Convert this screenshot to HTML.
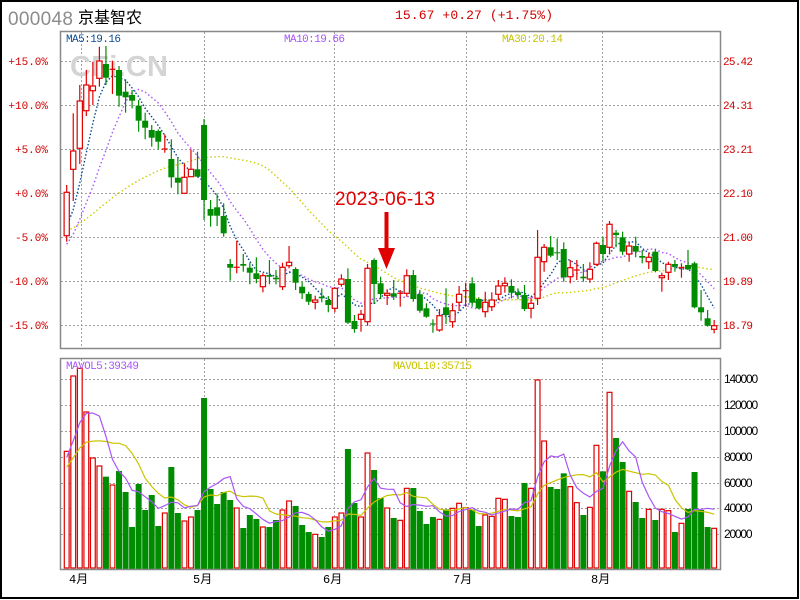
<!DOCTYPE html>
<html><head><meta charset="utf-8"><style>
html,body{margin:0;padding:0;background:#fff;}
#wrap{width:800px;height:600px;position:relative;overflow:hidden;}
svg text{font-family:"Liberation Mono",monospace;}
</style></head><body><div id="wrap">
<svg id="s" width="800" height="600" xmlns="http://www.w3.org/2000/svg">
<rect x="1" y="1" width="797" height="597" fill="#fff" stroke="#000" stroke-width="2"/>
<text x="8" y="25" font-size="19" fill="#8c8c8c" style="font-family:'Liberation Sans',sans-serif" textLength="65">000048</text>
<text x="78" y="23" font-size="16" fill="#000" style="font-family:'Liberation Sans','Noto Sans CJK SC',sans-serif">京基智农</text>
<text x="395" y="19" font-size="13" fill="#d00000" textLength="158">15.67 +0.27 (+1.75%)</text>
<g id="grid" stroke="#a0a0a0" stroke-width="1" stroke-dasharray="2 2"></g>
<text x="70" y="76" font-size="29" font-weight="bold" fill="#d4d4d4" style="font-family:'Liberation Sans',sans-serif" textLength="98">CFi.CN</text>
<g id="ma"></g>
<g id="cd"></g>
<g id="vol"></g>
<rect x="60.5" y="31.5" width="660" height="317" fill="none" stroke="#888" stroke-width="1.5"/>
<rect x="60.5" y="358.5" width="660" height="211" fill="none" stroke="#888" stroke-width="1.5"/>
<text x="66" y="42" font-size="11" fill="#0a4a96" textLength="55">MA5:19.16</text>
<text x="284" y="42" font-size="11" fill="#a855f7" textLength="61">MA10:19.66</text>
<text x="502" y="42" font-size="11" fill="#c8c400" textLength="61">MA30:20.14</text>
<text x="66" y="369" font-size="11" fill="#a855f7" textLength="73">MAVOL5:39349</text>
<text x="393" y="369" font-size="11" fill="#c8c400" textLength="79">MAVOL10:35715</text>
<g id="lab" font-size="11" fill="#d00000"></g>
<g id="vlab" font-size="12" fill="#000"></g>
<g font-size="12" fill="#000" style="font-family:'Liberation Sans','Noto Sans CJK SC',sans-serif">
<text x="69" y="583">4月</text><text x="193" y="583">5月</text><text x="323" y="583">6月</text><text x="453" y="583">7月</text><text x="591" y="583">8月</text>
</g>
<text x="335" y="205" font-size="19" fill="#e00000" style="font-family:'Liberation Sans',sans-serif" textLength="100">2023-06-13</text>
<rect x="384.5" y="212" width="4" height="40" fill="#e00000"/>
<polygon points="378,248 395,248 386.5,269" fill="#e00000"/>
</svg>
<script>
var NS="http://www.w3.org/2000/svg";
function el(p,t,a){var e=document.createElementNS(NS,t);for(var k in a)e.setAttribute(k,a[k]);p.appendChild(e);return e;}
var g=document.getElementById('grid');
[81,204,334,466,602].forEach(function(x){el(g,'line',{x1:x+.5,y1:32,x2:x+.5,y2:348});el(g,'line',{x1:x+.5,y1:359,x2:x+.5,y2:569});});
[61,105,149,193,237,281,325].forEach(function(y){el(g,'line',{x1:61,y1:y+.5,x2:720,y2:y+.5});});
[379,405,431,457,483,508,534].forEach(function(y){el(g,'line',{x1:61,y1:y+.5,x2:720,y2:y+.5});});
var lab=document.getElementById('lab');
var L=["+15.0%","+10.0%","+5.0%","+0.0%","-5.0%","-10.0%","-15.0%"],R=["25.42","24.31","23.21","22.10","21.00","19.89","18.79"];
[61,105,149,193,237,281,325].forEach(function(y,i){var t=el(lab,'text',{x:48,y:y+4,'text-anchor':'end'});t.textContent=L[i];var r=el(lab,'text',{x:723,y:y+4,textLength:30});r.textContent=R[i];});
var vl=document.getElementById('vlab');
["140000","120000","100000","80000","60000","40000","20000"].forEach(function(s,i){var y=[379,405,431,457,483,508,534][i];var t=el(vl,'text',{x:724,y:y+4,textLength:s.length*5.7,style:"font-family:'Liberation Sans',sans-serif"});t.textContent=s;});
var D=[[235.7,192.3,185,241.7],[169.3,151,113.3,201],[148.3,101,85,164],[110.7,85,70,116],[90.7,86,61.7,105],[78.3,61,46.7,86.7],[64,77.7,46,85],[69.3,69.3,60.7,94,1],[70,95.7,66,106.7],[91.7,97.3,79.3,112.7],
[95,100.7,90,108.3],[105.7,120.7,100,131.7],[120.7,127.7,112.7,139.3],[130,137.7,125,146.7],[131,141.7,129.3,149.3],[149,149,134.3,152.7,1],[159,177.3,139.3,187.7],[177.7,182.7,158.3,194.3],[193.3,177.3,163.3,193.3],[176.7,169.3,149.3,176.7],
[169.3,176.7,151.7,176.7],[125,200,119,220],[209,215.7,200,226.7],[207.3,215.7,194.3,226],[216,233.3,203.3,236.7],[264,267.7,259,280.7],[267.3,267.3,240.7,273.3,1],[264,265.7,254,271.7],[267.7,272.7,262.7,284.3],[273.3,279,257.3,283.3],
[286.7,275.7,273.3,292.3],[275,276.7,260,284.3],[277.7,279.3,270,284.3],[286.7,267.3,262.7,290],[265.7,262.3,246,268.3],[269,282.7,267.3,290],[286.7,293.3,281.7,299],[294,301.7,291.7,305],[302.3,300,295.7,309.3],[296.7,298.3,288.3,302.3],
[300,305,296,312.3],[308.3,288.3,287.3,312.3],[284.3,279,274.3,286.7],[279,322.7,268.3,324],[321,329,315,332.7],[319.3,314.3,310,331.7],[321.7,268.3,264,325.7],[260,284,258.3,304],[283.3,294,276.7,299],[295.3,293.3,289.3,305],
[293.3,296.7,280,300],[293.3,293.3,290,306.7,1],[293.3,275.7,269.3,296.7],[275,299,270,301.7],[294.3,310.7,290,312.7],[308.3,316.7,303.3,317.7],[324,324,319.3,332.7,0],[330,315.7,309,331.7],[307.3,315,288.3,324],[321.7,310.7,303.3,327.7],
[302.3,294.3,286,311],[290.7,290.7,282.7,306.7,1],[283.3,302.7,277.3,306.7],[299,308.3,297.3,309.3],[311.7,302.3,291.7,317.3],[306.7,300,292.3,311],[294.3,286,280,300],[285.7,283.3,277.3,292.7],[286,292.7,279.3,298.3],[292.3,295,288.3,299.3],
[295,309,285,311],[308.3,303.3,297.7,318.3],[298.3,257.3,230,305],[261.7,247.3,244,271.7],[247.3,255.7,236,257.3],[252.3,253.3,238.3,260],[249,277.3,242.3,281.7],[276.7,267.7,260,283.3],[270,270,260,280,1],[276.7,278.3,264,281.7],
[279,269.3,262.3,282.7],[264.3,243.3,241.7,265.7],[245,254,236.7,261],[247.3,224.3,221,254],[232.7,235,230,247.3],[237.3,251.7,231.7,255],[254,246,241.7,261.7],[246,251.7,236.7,257.3],[256,257.7,250,263.3],[261.7,257.3,252.7,269],
[251.7,271,249.3,272.3],[277.7,275.7,272.7,291.7],[272.3,264.3,261.7,280],[264,266.7,260,271.7],[267.7,267.7,263.3,277.7,1],[265,269.3,250,270],[263.3,307.3,261.7,308.3],[307.3,312.3,290,320.7],[318.3,325.7,310,326.7],[329.3,325.7,320,333.3]];
var V2=[334,108,85,216,354,378,410,435,393,456,561,432,510,465,558,519,381,519,543,531,510,174,447,492,456,480,504,564,525,537,561,561,540,510,483,498,555,576,583,591,561,531,519,327,489,531,339,390,474,504];
var V=V2.map(function(v){return 340+v/3;});
[474,481,385,384,453,492,471,478,448,445,430,443,449,498,465,469,415,418,468,471,369,385,60,243,381,387].forEach(function(v){V.push(360+v/3);});
[430,470,518,555,532,346,424,187,324,396,484,516,564,538,570,538,542,606,580,537,426,540,591,595].forEach(function(v){V.push(330+v/3);});
var RED="#e00000",GRN="#008c00";
var cd=document.getElementById('cd'),vg=document.getElementById('vol');
function X(i){return 66.7+i*6.54;}
D.forEach(function(d,i){
 var x=X(i),o=d[0],c=d[1],h=d[2],l=d[3];
 var up = d.length>4 ? d[4]==1 : c<o;
 var col=up?RED:GRN;
 var top=Math.min(o,c),bot=Math.max(o,c);
 if(bot-top<1){el(cd,'line',{x1:x,y1:h,x2:x,y2:l,stroke:col,'stroke-width':1.2});el(cd,'line',{x1:x-3,y1:top,x2:x+3,y2:top,stroke:col,'stroke-width':1.2});}
 else if(up){el(cd,'line',{x1:x,y1:h,x2:x,y2:top,stroke:col,'stroke-width':1.2});el(cd,'line',{x1:x,y1:bot,x2:x,y2:l,stroke:col,'stroke-width':1.2});el(cd,'rect',{x:x-2.6,y:top,width:5.2,height:bot-top,fill:'#fff',stroke:col,'stroke-width':1.2});}
 else{el(cd,'line',{x1:x,y1:h,x2:x,y2:l,stroke:col,'stroke-width':1.2});el(cd,'rect',{x:x-3,y:top,width:6,height:bot-top,fill:col});}
 var vt=V[i]||540;
 if(up){el(vg,'rect',{x:x-2.4,y:vt,width:4.8,height:568-vt,fill:'#fff',stroke:RED,'stroke-width':1.2});}
 else el(vg,'rect',{x:x-3,y:vt,width:6,height:569-vt,fill:GRN});
});
var ma=document.getElementById('ma');
var C=D.map(function(d){return d[1];});
function MA(arr,n,pad){var r=[];for(var i=0;i<arr.length;i++){var s=0;for(var k=0;k<n;k++){var j=i-k;s+=j>=0?arr[j]:pad;}r.push(s/n);}return r;}
function line(p,arr,col,dash,w){var pts=arr.map(function(v,i){return X(i).toFixed(1)+','+v.toFixed(1);}).join(' ');var a={points:pts,fill:'none',stroke:col,'stroke-width':w};if(dash)a['stroke-dasharray']=dash;el(p,'polyline',a);}
line(ma,MA(C,30,232),"#cccc00","1.5 2.5",1.4);
line(ma,MA(C,10,250),"#a855f7","1.5 2.5",1.4);
line(ma,MA(C,5,235),"#0a4a96","1.5 2",1.4);
var VV=V.map(function(v){return 569-v;});
var m5=MA(VV,5,110).map(function(v){return 569-v;}),m10=MA(VV,10,100).map(function(v){return 569-v;});
line(vg,m10,"#c8c400",null,1.2);
line(vg,m5,"#a855f7",null,1.2);
</script>
</div></body></html>
